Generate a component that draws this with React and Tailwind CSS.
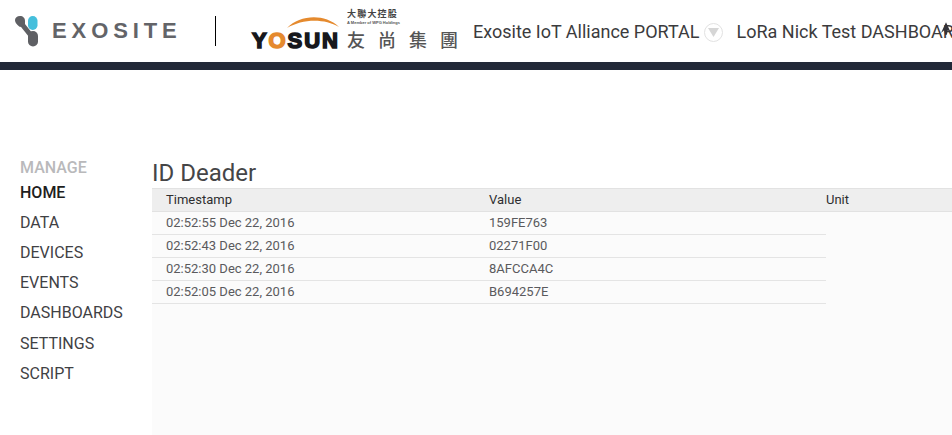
const roboto = "font-['Roboto',sans-serif]";

const navItems = [
  { label: 'HOME', active: true },
  { label: 'DATA' },
  { label: 'DEVICES' },
  { label: 'EVENTS' },
  { label: 'DASHBOARDS' },
  { label: 'SETTINGS' },
  { label: 'SCRIPT' },
];

const rows = [
  { time: '02:52:55 Dec 22, 2016', value: '159FE763' },
  { time: '02:52:43 Dec 22, 2016', value: '02271F00' },
  { time: '02:52:30 Dec 22, 2016', value: '8AFCCA4C' },
  { time: '02:52:05 Dec 22, 2016', value: 'B694257E' },
];

function ExositeMark() {
  return (
    <svg width="24" height="32" viewBox="0 0 24 32" className="shrink-0">
      <path d="M6 8 L18 23" stroke="#5f6064" strokeWidth="5" fill="none" />
      <path d="M5 1 C8 1 10 3 10 6 L10 10 L5 12 C1 9 0 7 0 5 C0 3 2 1 5 1 Z" fill="#5f6064" />
      <rect x="13" y="1" width="9.5" height="14" rx="4.7" fill="#45bfdc" />
      <rect x="13" y="16" width="10" height="15.5" rx="5" fill="#5f6064" />
    </svg>
  );
}

function YosunLogo() {
  return (
    <div className="flex w-[206px] shrink-0 items-end">
      <div className="relative w-[95px] shrink-0 pb-[2px]">
        <svg width="54" height="14" viewBox="0 0 54 14" className="absolute left-[34px] top-[-15px]">
          <path d="M1 13 C14 0 38 -2 53 12 C38 3 16 4 1 13 Z" fill="#e58a2e" />
        </svg>
        <div className="font-['Liberation_Sans',sans-serif] text-[22px] leading-[22px] font-black tracking-[1.9px] text-[#17181c] [-webkit-text-stroke:1.6px_#17181c]">
          Y<span className="text-[#e58a2e] [-webkit-text-stroke:1.6px_#e58a2e]">O</span>SUN
        </div>
      </div>
      <div className="flex flex-col pb-[4px]">
        <div className="font-['Noto_Sans_CJK_TC',sans-serif] text-[9px] leading-[10px] font-bold tracking-[1.2px] whitespace-nowrap text-[#444]">大聯大控股</div>
        <div className="mt-[1px] font-['Liberation_Sans',sans-serif] text-[4px] leading-[5px] font-bold whitespace-nowrap text-[#555]">A Member of WPG Holdings</div>
        <div className="mt-[3px] font-['Noto_Sans_CJK_TC',sans-serif] text-[18px] leading-[22px] font-medium tracking-[13px] whitespace-nowrap text-[#555]">友尚集團</div>
      </div>
    </div>
  );
}

function Header() {
  return (
    <header className="flex h-[62px] items-center overflow-hidden bg-white">
      <div className="flex w-[215px] shrink-0 items-center pl-[15px]">
        <ExositeMark />
        <span className="mb-[1px] ml-[13px] font-['Liberation_Sans',sans-serif] text-[22px] leading-none font-bold tracking-[4.9px] text-[#636468]">EXOSITE</span>
      </div>
      <div className="h-[30px] w-px shrink-0 bg-black" />
      <div className="ml-[36px] flex h-[46px] shrink-0 items-end">
        <YosunLogo />
      </div>
      <span className={`${roboto} ml-[15px] pt-[2px] text-lg whitespace-nowrap text-[#3b3b3d]`}>Exosite IoT Alliance PORTAL</span>
      <span className="mt-[2px] ml-[5px] flex size-[19px] shrink-0 items-center justify-center rounded-full border border-[#e2e2e2]">
        <svg width="11" height="9" viewBox="0 0 11 9"><path d="M0 0 H11 L5.5 9 Z" fill="#d6d6d6" /></svg>
      </span>
      <span className={`${roboto} relative ml-[13px] pt-[2px] text-lg whitespace-nowrap text-[#3b3b3d]`}>
        LoRa Nick Test DASHBOARD
        <svg width="10" height="13" viewBox="0 0 11 14" className="absolute left-[205px] top-[6px]">
          <path d="M5.5 0 L11 12 L7.5 9 L6.5 14 L4.5 14 L3.5 9 L0 12 Z" fill="#33333a" />
        </svg>
      </span>
    </header>
  );
}

export default function App() {
  return (
    <div className={`${roboto} h-[435px] w-[952px] overflow-hidden bg-white`}>
      <Header />
      <div className="h-[8px] bg-[#222838]" />
      <div className="flex pt-[88px]">
        <aside className="w-[152px] shrink-0 pl-[20px]">
          <div className="text-base leading-[20px] font-medium text-[#b9b9bb]">MANAGE</div>
          <nav className="mt-[3px] flex flex-col">
            {navItems.map((item) => (
              <a
                key={item.label}
                className={`h-[30.12px] text-base leading-[24px] ${item.active ? 'font-medium text-[#1e1e20]' : 'text-[#3f4144]'}`}
              >
                {item.label}
              </a>
            ))}
          </nav>
        </aside>
        <main className="min-w-0 flex-1">
          <h1 className="text-2xl leading-[30px] text-[#454547]">ID Deader</h1>
          <div className="h-[247px] bg-[#fbfbfb]">
            <div className="grid h-[24px] grid-cols-[337px_337px_1fr] items-center border-y border-[#e2e2e2] bg-[#eeeeee] text-[13px] text-[#2e2e30]">
              <span className="pl-[14px]">Timestamp</span>
              <span>Value</span>
              <span>Unit</span>
            </div>
            <div className="w-[674px]">
              {rows.map((row) => (
                <div key={row.time} className="grid h-[23px] grid-cols-[337px_337px] items-center border-b border-[#e4e4e4] text-[13px] text-[#5a5a5d]">
                  <span className="pl-[14px]">{row.time}</span>
                  <span>{row.value}</span>
                </div>
              ))}
            </div>
          </div>
        </main>
      </div>
    </div>
  );
}
